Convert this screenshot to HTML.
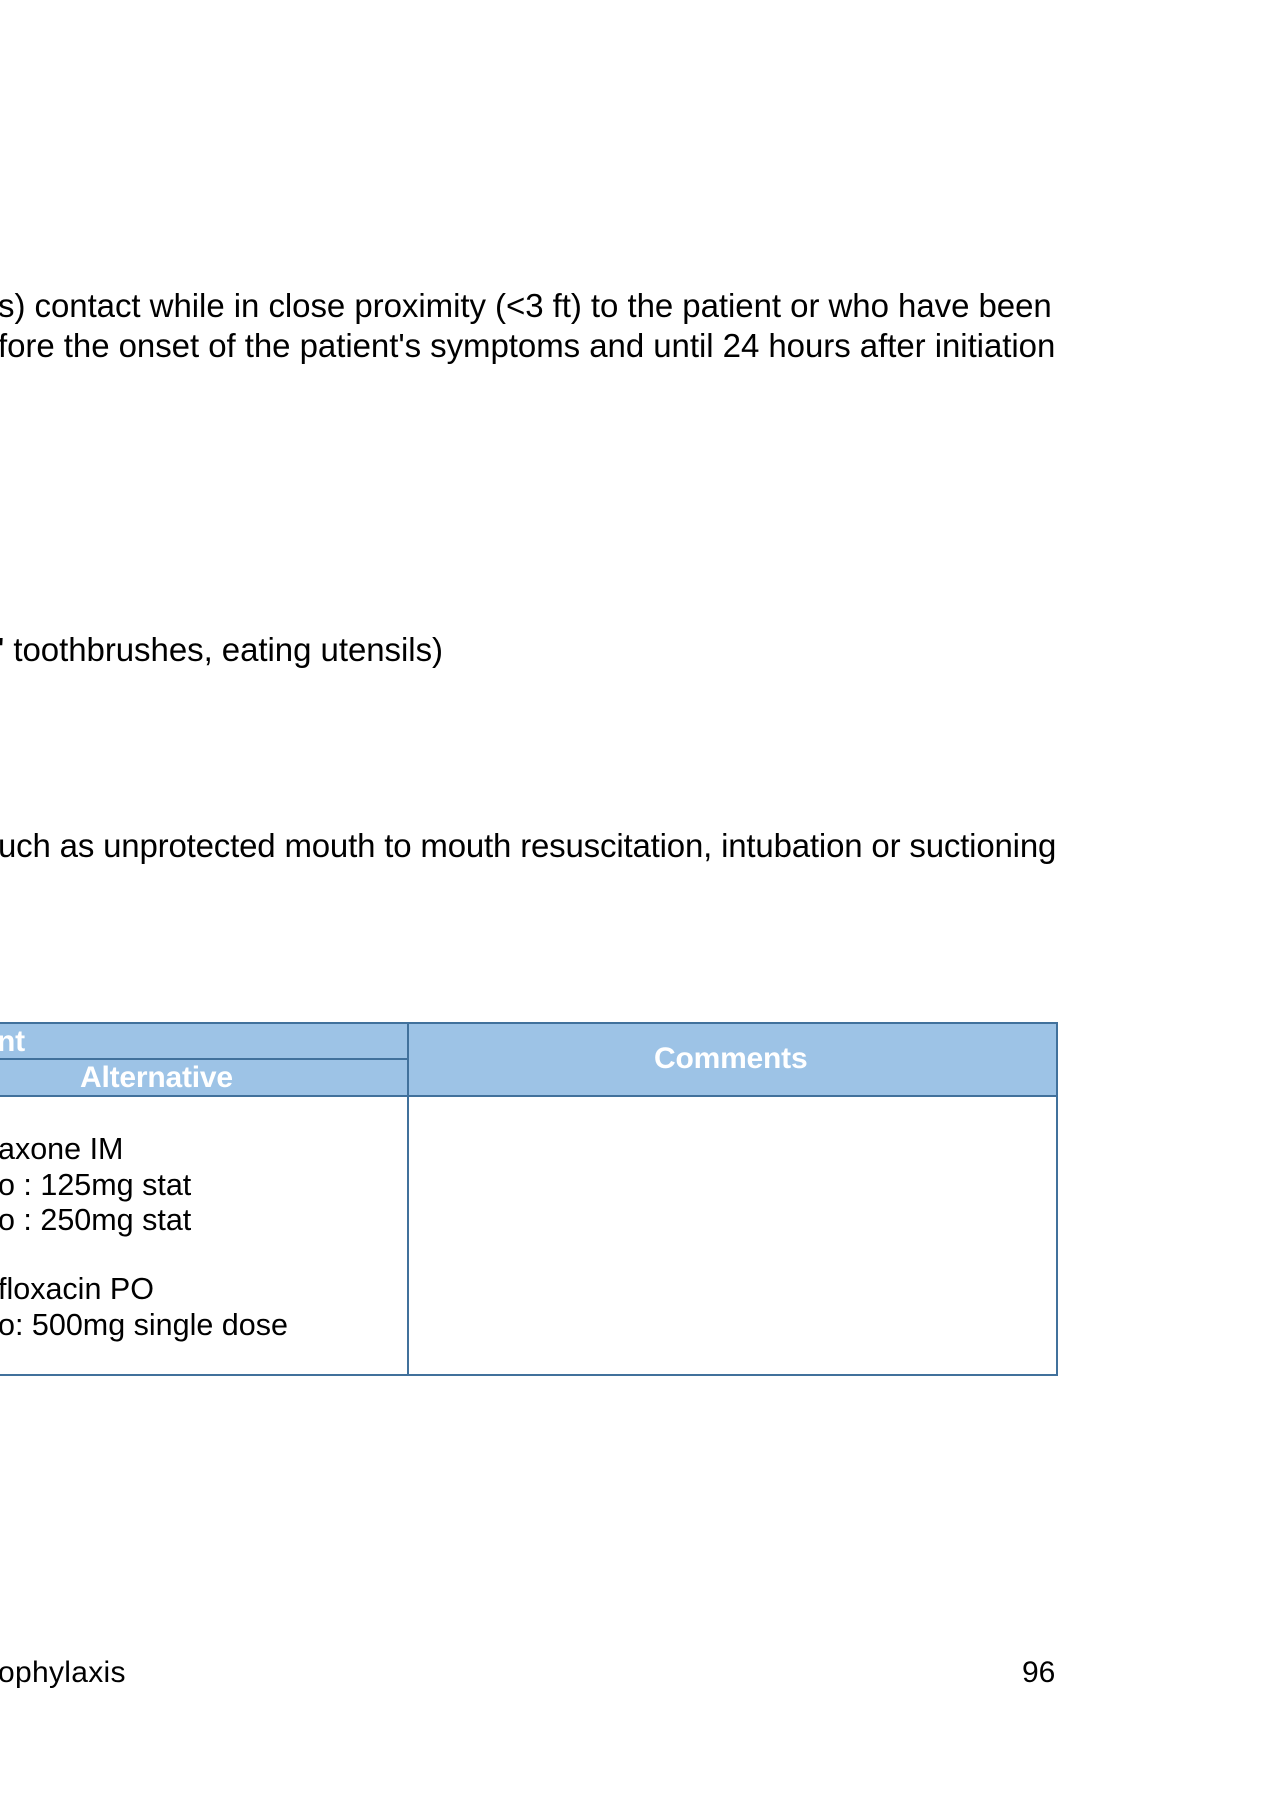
<!DOCTYPE html>
<html><head><style>
body{margin:0;width:1273px;height:1800px;background:#fff;position:relative;overflow:hidden;font-family:"Liberation Sans",sans-serif;color:#000}
.t{position:absolute;white-space:nowrap;font-size:33px;line-height:1;letter-spacing:-0.05px}
.b{position:absolute;white-space:nowrap;font-size:30.5px;line-height:1}
.h{position:absolute;white-space:nowrap;font-size:30px;font-weight:bold;color:#fff;line-height:1;letter-spacing:-0.2px}
.ln{position:absolute;background:#41719c}
</style></head><body>
<div class="t" style="left:-2px;top:289px">s) contact while in close proximity (&lt;3 ft) to the patient or who have been</div>
<div class="t" style="left:-2px;top:329px">fore the onset of the patient's symptoms and until 24 hours after initiation</div>
<div class="t" style="left:-2px;top:633px">' toothbrushes, eating utensils)</div>
<div class="t" style="left:-2px;top:829px;letter-spacing:-0.18px">uch as unprotected mouth to mouth resuscitation, intubation or suctioning</div>

<div style="position:absolute;left:0;top:1023px;width:1057px;height:73px;background:#9dc3e6"></div>
<div class="ln" style="left:0;top:1022px;width:1058px;height:2px"></div>
<div class="ln" style="left:0;top:1058px;width:408px;height:2px"></div>
<div class="ln" style="left:0;top:1095px;width:1058px;height:2px"></div>
<div class="ln" style="left:0;top:1374px;width:1058px;height:2px"></div>
<div class="ln" style="left:407px;top:1022px;width:2px;height:354px"></div>
<div class="ln" style="left:1056px;top:1022px;width:2px;height:354px"></div>
<div class="h" style="left:-3px;top:1027px">nt</div>
<div class="h" style="left:80px;top:1063px">Alternative</div>
<div class="h" style="left:654px;top:1044px">Comments</div>

<div class="b" style="left:-2px;top:1134px">axone IM</div>
<div class="b" style="left:-2px;top:1170px">o : 125mg stat</div>
<div class="b" style="left:-2px;top:1205px">o : 250mg stat</div>
<div class="b" style="left:-2px;top:1274px">floxacin PO</div>
<div class="b" style="left:-2px;top:1310px">o: 500mg single dose</div>

<div class="b" style="left:-2px;top:1658px;font-size:30px;letter-spacing:0.3px">ophylaxis</div>
<div class="b" style="left:1022px;top:1658px;font-size:30px">96</div>
</body></html>
